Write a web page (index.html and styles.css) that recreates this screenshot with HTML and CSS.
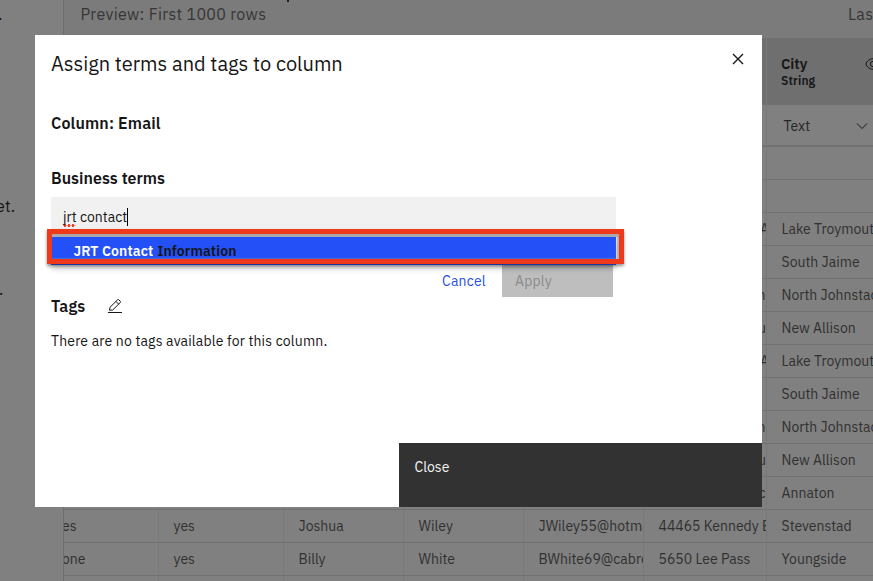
FILE: index.html
```html
<!DOCTYPE html>
<html lang="en">
<head>
<meta charset="utf-8">
<title>Assign terms and tags to column</title>
<link rel="stylesheet" href="styles.css">
</head>
<body>
<div class="page">
  <aside class="side"><p class="s1">.</p><p class="s2">et.</p><p class="s3">.</p></aside>
  <main class="main">
    <div class="topbar"><i class="tick"></i><span class="preview">Preview: First 1000 rows</span><span class="last">Las</span></div>
    <div class="row head"><div></div><div></div><div></div><div></div><div></div><div></div>
      <div class="city"><div><b>City</b><small>String</small></div>
        <svg class="eye" width="16" height="14" viewBox="0 0 16 14"><path d="M.8 7C2.2 3.700 4.800 1.700 8 1.700S13.800 3.700 15.200 7C13.800 10.300 11.200 12.300 8 12.300S2.200 10.300.8 7Z"/><circle cx="8" cy="7" r="2.700"/></svg>
      </div>
    </div>
    <div class="row filter"><div></div><div></div><div></div><div></div><div></div><div></div>
      <div class="type"><span>Text</span><svg width="12" height="8" viewBox="0 0 12 8"><path d="M1 1.500l5 5 5-5"/></svg></div>
    </div>
    <div class="rows">
      <div class="row"><div></div><div></div><div></div><div></div><div></div><div></div><div></div></div>
      <div class="row"><div></div><div></div><div></div><div></div><div></div><div></div><div></div></div>
      <div class="row"><div></div><div></div><div></div><div></div><div></div><div class="cut">A</div><div>Lake Troymouth</div></div>
      <div class="row"><div></div><div></div><div></div><div></div><div></div><div></div><div>South Jaime</div></div>
      <div class="row"><div></div><div></div><div></div><div></div><div></div><div class="cut n">no</div><div>North Johnstad</div></div>
      <div class="row"><div></div><div></div><div></div><div></div><div></div><div class="cut u">u</div><div>New Allison</div></div>
      <div class="row"><div></div><div></div><div></div><div></div><div></div><div class="cut">A</div><div>Lake Troymouth</div></div>
      <div class="row"><div></div><div></div><div></div><div></div><div></div><div></div><div>South Jaime</div></div>
      <div class="row"><div></div><div></div><div></div><div></div><div></div><div class="cut n">no</div><div>North Johnstad</div></div>
      <div class="row"><div></div><div></div><div></div><div></div><div></div><div class="cut u">u</div><div>New Allison</div></div>
      <div class="row"><div></div><div></div><div></div><div></div><div></div><div class="cut c">co</div><div>Annaton</div></div>
      <div class="row"><div class="first">es</div><div>yes</div><div>Joshua</div><div>Wiley</div><div>JWiley55@hotmail</div><div>44465 Kennedy E</div><div>Stevenstad</div></div>
      <div class="row"><div class="first">one</div><div>yes</div><div>Billy</div><div>White</div><div>BWhite69@cabrera</div><div>5650 Lee Pass</div><div>Youngside</div></div>
      <div class="row"><div></div><div></div><div></div><div></div><div></div><div></div><div></div></div>
    </div>
  </main>
</div>
<section class="modal" role="dialog">
  <header class="title"><h1>Assign terms and tags to column</h1>
    <svg width="12" height="12" viewBox="0 0 12 12"><path d="M1 1l10 10M11 1L1 11"/></svg>
  </header>
  <h2 class="colname">Column: Email</h2>
  <h2 class="bt">Business terms</h2>
  <div class="field"><span class="typo">jrt</span><span class="rest">contact</span><i class="caret"></i></div>
  <div class="option"><b>JRT Contact</b><span>Information</span><div class="mark"></div></div>
  <div class="actions"><span class="cancel">Cancel</span><span class="apply">Apply</span></div>
  <div class="tags"><h2>Tags</h2>
    <svg width="14" height="14" viewBox="0 0 14 14"><path d="M0 13.500h14M1.400 11.200l.6-2.900L9.700.7q.5-.4 1 0l1.700 1.700q.5.500 0 1L4.700 11zM8 2.500l2.700 2.700"/></svg>
  </div>
  <p class="none">There are no tags available for this column.</p>
  <footer class="close"><span>Close</span></footer>
</section>
</body>
</html>
```
FILE: styles.css
```css
* { box-sizing: border-box; }
body { margin: 0; width: 873px; height: 581px; overflow: hidden; background: #808080; font-family: "IBM Plex Sans", Roboto, sans-serif; font-size: 14px; color: #161616; }
h1, h2, p { margin: 0; white-space: nowrap; }
svg { display: block; fill: none; stroke: #161616; flex: none; }
.page { display: flex; height: 581px; }
.side { width: 64px; flex: none; border-right: 1px solid #6e6e6e; font-size: 16px; line-height: 20px; letter-spacing: .2px; }
.s1 { padding-top: 4px; margin-left: -2px; }
.s2 { padding-top: 172px; margin-left: -4px; }
.s3 { padding-top: 63px; margin-left: -1px; }
.main { width: 809px; flex: none; overflow: hidden; }
.topbar { position: relative; height: 38px; background: #7b7b7b; display: flex; justify-content: space-between; padding: 4px 0 0 16.500px; font-size: 16px; line-height: 20px; color: #363636; }
.tick { position: absolute; left: 223px; top: 0; width: 1.500px; height: 2px; background: #222; }
.preview { letter-spacing: .32px; }
.last { width: 25px; letter-spacing: .3px; }
.row { display: grid; grid-template-columns: 95px 125px 120px 120px 120px 123px 106px; height: 33px; border-bottom: 1px solid #717171; line-height: 32px; color: #303030; }
.row > div { border-right: 1px solid #797979; padding-left: 14.500px; overflow: hidden; white-space: nowrap; }
.row > div:last-child { border-right: 0; }
.row > .first { padding-left: 0; margin-left: -2px; }
.row > .cut { padding-left: 116px; }
.row > .cut.n { padding-left: 113.500px; }
.row > .cut.u { padding-left: 114px; }
.row > .cut.c { padding-left: 114.500px; }
.row.head { height: 67px; background: #6f6f6f; border: 0; color: #161616; }
.head > div { border-color: #7a7a7a; }
.row .city { display: flex; justify-content: space-between; padding: 17px 0 0 14px; line-height: 17px; }
.city b, .city small { display: block; }
.city b { font-size: 14.500px; font-weight: 600; }
.city small { font-size: 12px; font-weight: 600; letter-spacing: .15px; }
.eye { margin: 2px -8px 0 0; }
.row.filter { height: 42px; line-height: 41px; border-bottom: 2px solid #727272; }
.row .type { display: flex; justify-content: space-between; align-items: center; padding: 2px 5px 0 16.500px; color: #262626; }
.modal { position: absolute; left: 35px; top: 35px; width: 727px; height: 472px; background: #fff; display: flex; flex-direction: column; padding-left: 16px; }
.title { display: flex; justify-content: space-between; padding: 16px 18px 0 0; height: 76px; }
h1 { font-size: 20px; line-height: 26px; font-weight: 400; }
.title svg { margin-top: 2px; stroke-width: 1.400; }
h2 { font-size: 16px; line-height: 24px; font-weight: 600; letter-spacing: .15px; }
.bt { margin-top: 31px; letter-spacing: .03px; }
.field { margin-top: 7px; width: 565px; height: 40px; background: #f1f1f1; display: flex; align-items: center; padding-left: 12px; }
.typo { line-height: 20px; background: radial-gradient(circle, #e9402e 1.300px, transparent 1.700px) 0 100% / 4px 3px repeat-x; width: 13px; }
.rest { margin-left: 4px; }
.caret { width: 1px; height: 18px; background: #000; }
.option { width: 565px; height: 28px; background: #2450f7; display: flex; align-items: center; gap: 4px; padding-left: 22.500px; position: relative; font-weight: 600; color: #161616; letter-spacing: .12px; box-shadow: 0 3px 6px #0004; z-index: 1; }
.option b { font-weight: 600; color: #fff; }
.mark { position: absolute; left: -4px; top: -8px; width: 577px; height: 35px; border: 5px solid #ee3a1b; box-shadow: 0 2px 3px #0006, inset 0 3px 0 #aaa, inset -2px 0 2px #aaa; }
.actions { display: flex; width: 562px; height: 32px; justify-content: flex-end; line-height: 32px; letter-spacing: .2px; }
.cancel { color: #2450e8; width: 60px; }
.apply { width: 111px; background: #bebebe; color: #8b8b8b; padding-left: 13px; }
.tags { display: flex; align-items: center; height: 24px; margin-top: -3px; }
.tags h2 { width: 57px; }
.none { margin-top: 13px; line-height: 20px; letter-spacing: .16px; }
.close { margin-top: auto; align-self: flex-end; width: 363px; height: 64px; background: #323232; color: #f4f4f4; padding: 14px 15.500px; line-height: 20px; letter-spacing: 0; }
```
